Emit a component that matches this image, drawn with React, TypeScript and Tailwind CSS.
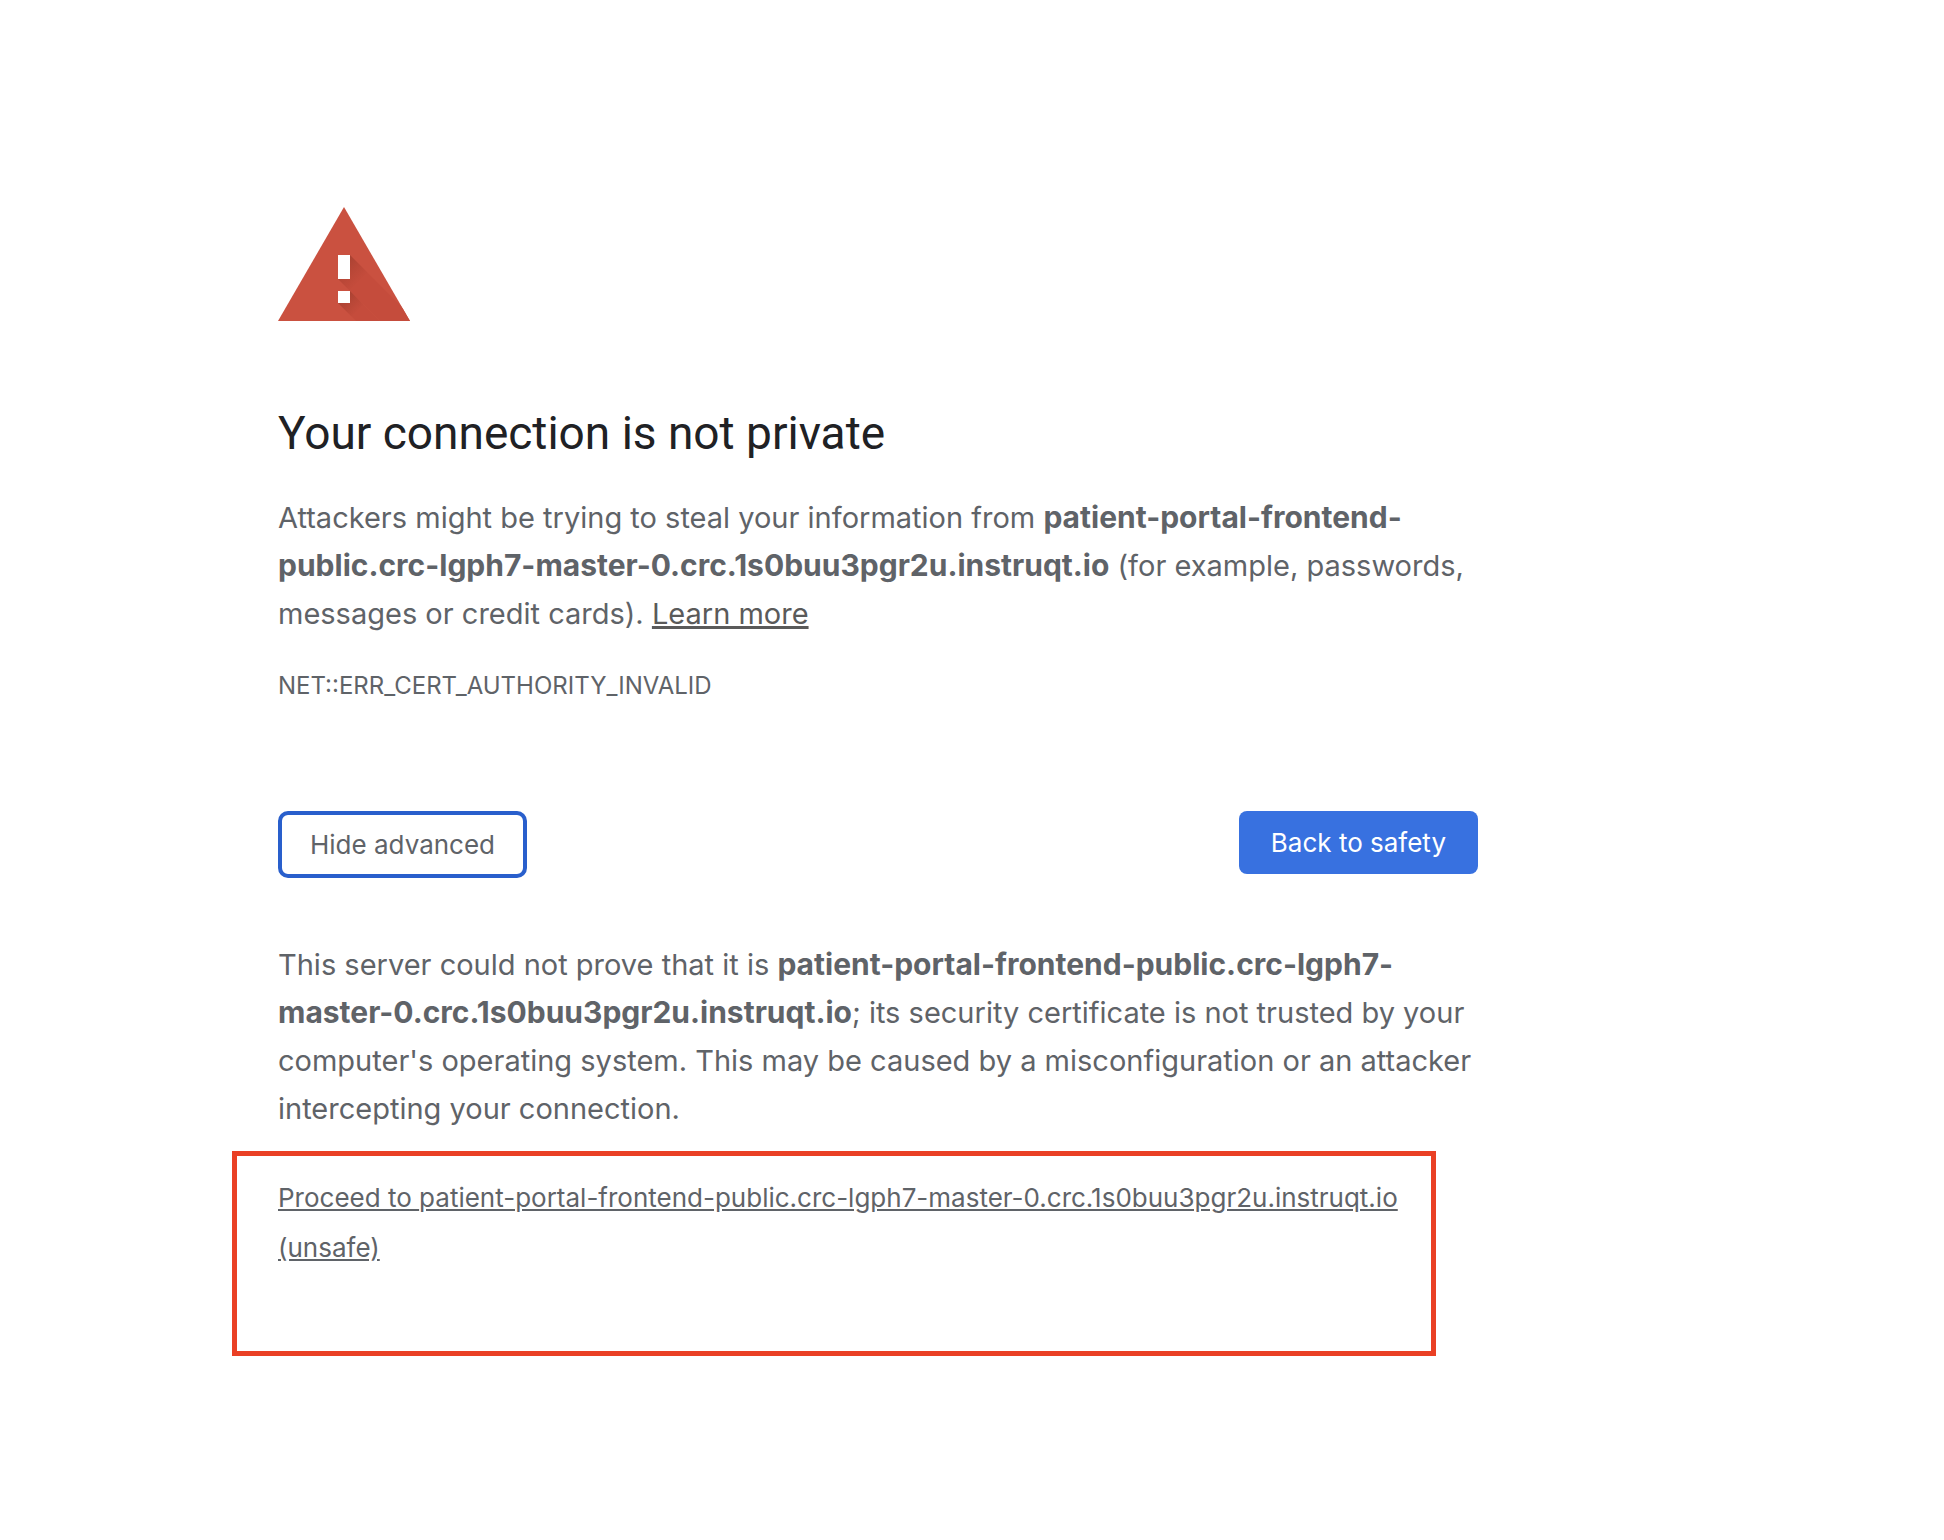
const HOST = "patient-portal-frontend-public.crc-lgph7-master-0.crc.1s0buu3pgr2u.instruqt.io";

function WarningIcon() {
  return (
    <svg viewBox="0 0 132 114" className="block h-[114px] w-[132px]" role="img" aria-label="Warning">
      <defs>
        <linearGradient id="shade" gradientUnits="userSpaceOnUse" x1="66" y1="54" x2="84" y2="72">
          <stop offset="0" stopColor="#a94232" />
          <stop offset="0.5" stopColor="#b94737" />
          <stop offset="1" stopColor="#c54c3c" />
        </linearGradient>
        <linearGradient id="shadeDot" gradientUnits="userSpaceOnUse" x1="66" y1="90" x2="80" y2="104">
          <stop offset="0" stopColor="#a94232" />
          <stop offset="0.5" stopColor="#b94737" />
          <stop offset="1" stopColor="#c54c3c" />
        </linearGradient>
        <clipPath id="triangle">
          <path d="M66 0 132 114H0Z" />
        </clipPath>
      </defs>
      <path d="M66 0 132 114H0Z" fill="#ca5140" />
      <g clipPath="url(#triangle)">
        <path d="M72 48 138 114H102L60 72Z" fill="url(#shade)" />
        <path d="M72 84 102 114H78L60 96Z" fill="url(#shadeDot)" />
      </g>
      <path d="M60 48h12v24H60zM60 84h12v12H60z" fill="#fff" />
    </svg>
  );
}

export default function App() {
  return (
    <main className="min-h-screen bg-white px-[278px] pt-[207px] pb-24 font-['Inter',sans-serif] text-[29px] leading-[48px] text-[#5f6368]">
      <div className="w-full max-w-[1200px]">
        <WarningIcon />
        <h1 className="mt-[83px] font-['Roboto',sans-serif] text-[46px] leading-[58px] text-[#202124]">
          Your connection is not private
        </h1>
        <p className="mt-8">
          Attackers might be trying to steal your information from{" "}
          <strong className="text-[30px] leading-none">{HOST}</strong> (for example, passwords, messages or credit
          cards).{" "}
          <a href="#learn-more" className="text-[#5a5a5a] underline decoration-[3px]">
            Learn more
          </a>
        </p>
        <p className="mt-[30px] text-[24px] leading-[36px]">NET::ERR_CERT_AUTHORITY_INVALID</p>
        <div className="mt-[107px] flex items-start justify-between">
          <button
            type="button"
            className="rounded-[10px] border-4 border-[#295fcc] bg-white px-7 py-2 text-[26px] leading-[43px]"
          >
            Hide advanced
          </button>
          <button type="button" className="rounded-lg bg-[#3871e0] px-8 py-3 text-[26px] leading-[39px] text-white">
            Back to safety
          </button>
        </div>
        <p className="mt-[63px]">
          This server could not prove that it is <strong className="text-[30px] leading-none">{HOST}</strong>; its
          security certificate is not trusted by your computer's operating system. This may be caused by a
          misconfiguration or an attacker intercepting your connection.
        </p>
        <div className="mt-[18px] mr-[42px] -ml-[46px] border-[5px] border-[#ea4025] pt-[17px] pb-[78px] pl-[41px] text-[26px] leading-[50px]">
          <a href="#proceed" className="underline">
            Proceed to {HOST} (unsafe)
          </a>
        </div>
      </div>
    </main>
  );
}
